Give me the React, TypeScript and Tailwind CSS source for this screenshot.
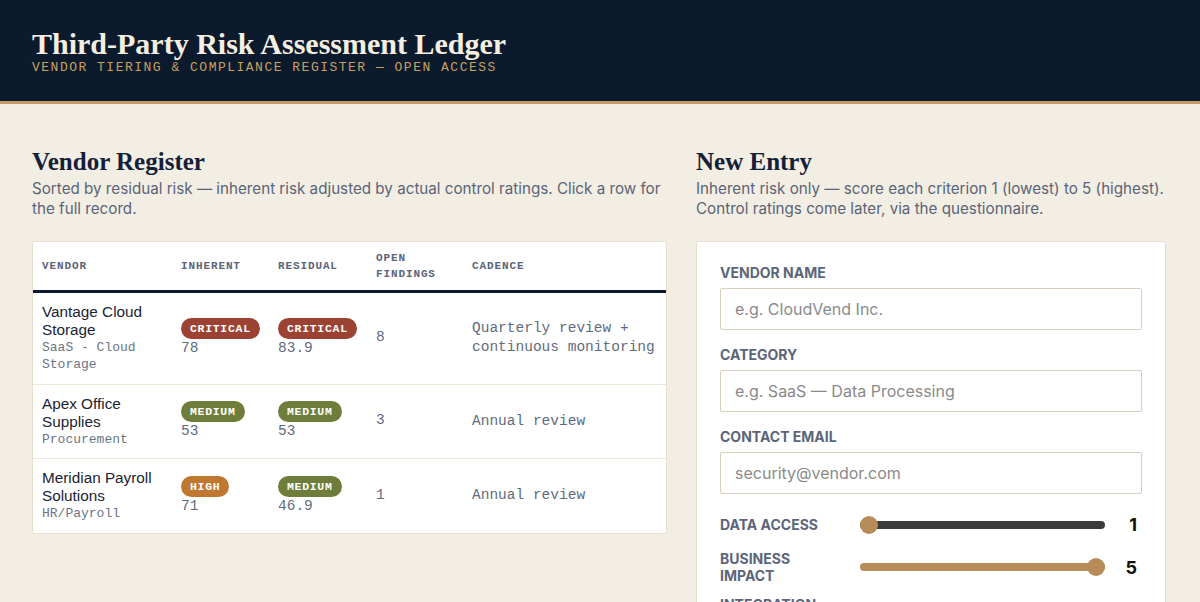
import React from 'react';

type Level = 'CRITICAL' | 'HIGH' | 'MEDIUM';

const badgeColor: Record<Level, string> = {
  CRITICAL: 'bg-[#9c4233]',
  HIGH: 'bg-[#c0772f]',
  MEDIUM: 'bg-[#6f7d3a]',
};

const vendors = [
  {
    name: 'Vantage Cloud Storage',
    category: 'SaaS - Cloud Storage',
    inherent: { level: 'CRITICAL' as Level, score: '78' },
    residual: { level: 'CRITICAL' as Level, score: '83.9' },
    findings: 8,
    cadence: 'Quarterly review + continuous monitoring',
  },
  {
    name: 'Apex Office Supplies',
    category: 'Procurement',
    inherent: { level: 'MEDIUM' as Level, score: '53' },
    residual: { level: 'MEDIUM' as Level, score: '53' },
    findings: 3,
    cadence: 'Annual review',
  },
  {
    name: 'Meridian Payroll Solutions',
    category: 'HR/Payroll',
    inherent: { level: 'HIGH' as Level, score: '71' },
    residual: { level: 'MEDIUM' as Level, score: '46.9' },
    findings: 1,
    cadence: 'Annual review',
  },
];

const serif = "font-['Liberation_Serif',serif]";
const mono = "font-['Liberation_Mono',monospace]";

function Risk({ level, score }: { level: Level; score: string }) {
  return (
    <div className="flex flex-col items-start">
      <span
        className={`${badgeColor[level]} ${mono} text-white text-[11.5px] font-bold tracking-[0.06em] leading-[21px] px-[9px] rounded-full`}
      >
        {level}
      </span>
      <span className={`${mono} text-[14.5px] leading-[19px] text-[#5f6b7e]`}>{score}</span>
    </div>
  );
}

function Field({ label, placeholder }: { label: string; placeholder: string }) {
  return (
    <div className="flex flex-col">
      <label className="text-[14px] font-bold leading-[18px] text-[#5b6579] mb-[6px]">{label}</label>
      <input
        placeholder={placeholder}
        className="h-[42px] w-full border border-[#d9d0bc] rounded-[2px] px-[14px] text-[16px] text-[#1a2333] placeholder:text-[#8a8a8a] outline-none bg-white"
      />
    </div>
  );
}

function Slider({ label, value }: { label: string; value: number }) {
  const pct = ((value - 1) / 4) * 100;
  return (
    <div className="flex items-center">
      <div className="w-[140px] pr-[40px] text-[14px] font-bold leading-[17px] text-[#5b6579]">{label}</div>
      <div className="relative flex-1 h-[18px] flex items-center">
        <div className="h-[8px] w-full rounded-full bg-[#3b3b3b] overflow-hidden">
          <div className="h-full bg-[#b68d58]" style={{ width: `${pct}%` }} />
        </div>
        <div
          className="absolute top-0 w-[18px] h-[18px] rounded-full bg-[#b68d58]"
          style={{ left: `calc(${pct}% - ${(pct / 100) * 18}px)` }}
        />
      </div>
      <div className="w-[37px] text-right pr-[5px] text-[18px] font-bold text-[#111]">{value}</div>
    </div>
  );
}

export default function App() {
  return (
    <div className="min-h-screen bg-[#f3eee3] font-['Inter',sans-serif]">
      <header className="bg-[#0b1a2d] border-b-[3px] border-[#c49a62] h-[104px] px-8 pt-[28px]">
        <h1 className={`${serif} text-[30px] font-bold leading-[31px] text-[#f5efe2]`}>
          Third-Party Risk Assessment Ledger
        </h1>
        <p className={`${mono} text-[13px] leading-[16px] tracking-[0.115em] text-[#c9a15f] mt-[1px]`}>
          VENDOR TIERING &amp; COMPLIANCE REGISTER — OPEN ACCESS
        </p>
      </header>

      <main className="flex gap-[29px] px-8 pt-[44px]">
        <section className="w-[635px]">
          <h2 className={`${serif} text-[25px] font-bold leading-[28px] text-[#13203a]`}>Vendor Register</h2>
          <p className="text-[15.2px] leading-[20px] text-[#5a6478] mt-[3px]">
            Sorted by residual risk — inherent risk adjusted by actual control ratings. Click a row for the full record.
          </p>

          <div className="mt-[22px] bg-white border border-[#e6dfcf] rounded-[2px]">
            <table className="w-full border-collapse">
              <thead>
                <tr className={`${mono} text-[11px] font-bold tracking-[0.08em] text-[#5b6579] leading-[16px] border-b-[3px] border-[#0b1a2d]`}>
                  <th className="text-left font-bold pl-[9px] h-[49px] w-[148px]">VENDOR</th>
                  <th className="text-left font-bold w-[97px]">INHERENT</th>
                  <th className="text-left font-bold w-[98px]">RESIDUAL</th>
                  <th className="text-left font-bold w-[96px]">
                    OPEN
                    <br />
                    FINDINGS
                  </th>
                  <th className="text-left font-bold">CADENCE</th>
                </tr>
              </thead>
              <tbody>
                {vendors.map((v, i) => (
                  <tr key={v.name} className={i < vendors.length - 1 ? 'border-b border-[#eee8da]' : ''}>
                    <td className="pl-[9px] py-[10px] align-middle">
                      <div className="font-['Liberation_Sans',sans-serif] text-[15.3px] leading-[18px] text-[#1a2333] w-[125px]">
                        {v.name}
                      </div>
                      <div className={`${mono} text-[13px] leading-[17.5px] text-[#6b7585] w-[120px]`}>{v.category}</div>
                    </td>
                    <td className="align-middle">
                      <Risk {...v.inherent} />
                    </td>
                    <td className="align-middle">
                      <Risk {...v.residual} />
                    </td>
                    <td className={`${mono} text-[14.5px] text-[#5f6b7e] align-middle`}>{v.findings}</td>
                    <td className={`${mono} text-[14.5px] leading-[19px] text-[#5f6b7e] align-middle pr-2`}>{v.cadence}</td>
                  </tr>
                ))}
              </tbody>
            </table>
          </div>
        </section>

        <section className="w-[470px]">
          <h2 className={`${serif} text-[25px] font-bold leading-[28px] text-[#13203a]`}>New Entry</h2>
          <p className="text-[15.2px] leading-[20px] text-[#5a6478] mt-[3px]">
            Inherent risk only — score each criterion 1 (lowest) to 5 (highest). Control ratings come later, via the questionnaire.
          </p>

          <div className="mt-[22px] bg-white border border-[#e6dfcf] rounded-[2px] px-[23px] pt-[22px] pb-6 flex flex-col gap-[16px]">
            <Field label="VENDOR NAME" placeholder="e.g. CloudVend Inc." />
            <Field label="CATEGORY" placeholder="e.g. SaaS — Data Processing" />
            <Field label="CONTACT EMAIL" placeholder="security@vendor.com" />
            <div className="flex flex-col gap-[12px] pt-[1px]">
              <Slider label="DATA ACCESS" value={1} />
              <Slider label="BUSINESS IMPACT" value={5} />
              <Slider label="INTEGRATION DEPTH" value={3} />
            </div>
          </div>
        </section>
      </main>
    </div>
  );
}
